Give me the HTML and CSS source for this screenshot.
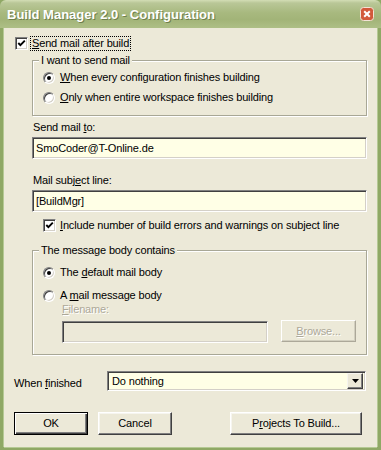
FILE: index.html
```html
<!DOCTYPE html>
<html lang="en">
<head>
    <meta charset="UTF-8">
    <title>Build Manager 2.0 - Configuration</title>
    <link rel="stylesheet" href="styles.css">
</head>
<body>

    <div class="window">

        <!-- Title bar -->
        <div class="titlebar">
            <span class="title">Build Manager 2.0 - Configuration</span>
            <span class="close-btn">
                <svg width="14" height="14" viewBox="0 0 14 14">
                    <rect x="0.5" y="0.5" width="13" height="13" rx="3" fill="#d2593b" stroke="#f3e3d6"/>
                    <path d="M4.2 4.2 L9.8 9.8 M9.8 4.2 L4.2 9.8" stroke="#fff" stroke-width="2"/>
                </svg>
            </span>
        </div>

        <div class="frame">

            <div class="check-row top-check">
                <span class="checkbox"><svg width="9" height="9" viewBox="0 0 9 9"><polyline points="1.3,4 3.4,6.2 7.8,1.6" fill="none" stroke="#000" stroke-width="1.9"/></svg></span>
                <span class="focus"><u>S</u>end mail after build</span>
            </div>

            <fieldset class="group group-send">
                <legend>I want to send mail</legend>
                <div class="radio-row"><span class="radio on"></span><span><u>W</u>hen every configuration finishes building</span></div>
                <div class="radio-row second"><span class="radio"></span><span><u>O</u>nly when entire workspace finishes building</span></div>
            </fieldset>

            <div class="field-label">Send mail <u>t</u>o:</div>
            <div class="textbox">SmoCoder@T-Online.de</div>

            <div class="field-label subject-label">Mail subj<u>e</u>ct line:</div>
            <div class="textbox">[BuildMgr]</div>

            <div class="check-row sub-check">
                <span class="checkbox"><svg width="9" height="9" viewBox="0 0 9 9"><polyline points="1.3,4 3.4,6.2 7.8,1.6" fill="none" stroke="#000" stroke-width="1.9"/></svg></span>
                <span><u>I</u>nclude number of build errors and warnings on subject line</span>
            </div>

            <fieldset class="group group-body">
                <legend>The message body contains</legend>
                <div class="radio-row"><span class="radio on"></span><span>The <u>d</u>efault mail body</span></div>
                <div class="radio-row second"><span class="radio"></span><span>A <u>m</u>ail message body</span></div>
                <div class="file-label disabled"><u>F</u>ilename:</div>
                <div class="file-row">
                    <div class="textbox file-box"></div>
                    <div class="button browse disabled"><u>B</u>rowse...</div>
                </div>
            </fieldset>

            <div class="finish-row">
                <span class="finish-label">When <u>f</u>inished</span>
                <div class="combo">
                    <span class="combo-text">Do nothing</span>
                    <span class="combo-btn"><svg width="7" height="4" viewBox="0 0 7 4"><polygon points="0,0 7,0 3.5,4" fill="#000"/></svg></span>
                </div>
            </div>

            <div class="button-row">
                <div class="button default">OK</div>
                <div class="button cancel">Cancel</div>
                <div class="button projects">P<u>r</u>ojects To Build...</div>
            </div>

        </div>
    </div>

</body>
</html>
```

FILE: styles.css
```css
* {
    box-sizing: border-box;
}

body {
    margin: 0;
    font-family: "Liberation Sans", Arial, sans-serif;
    font-size: 11px;
    letter-spacing: -0.15px;
    line-height: 13px;
    color: #000;
}

.window {
    width: 381px;
    height: 450px;
    display: flex;
    flex-direction: column;
    background: #8fa865;
}

.titlebar {
    height: 28px;
    display: flex;
    align-items: center;
    padding: 0 7px 0 7px;
    background: linear-gradient(to bottom, #d3ddb5 0, #b9c797 3px, #a8b97f 45%, #a2b478 70%, #aebf86 100%);
    border-radius: 6px 6px 0 0;
}

.title {
    color: #fff;
    font-size: 13px;
    font-weight: bold;
    letter-spacing: 0;
    text-shadow: 1px 1px 0 #6f7f4c;
}

.close-btn {
    margin-left: auto;
    height: 14px;
    margin-top: -1px;
}

.frame {
    flex: 1;
    background: #ece9d8;
    margin: 0 4px 3px 4px;
    padding: 0 10px 0 10px;
    display: flex;
    flex-direction: column;
    box-shadow: -1px 0 0 #b5c994, 1px 0 0 #b5c994, 0 1px 0 #b5c994;
}

u {
    text-decoration: underline;
    text-underline-offset: 1px;
}

/* checkboxes */
.check-row {
    display: flex;
    align-items: center;
    height: 13px;
}

.top-check {
    margin-top: 9px;
    margin-left: 1px;
}

.sub-check {
    margin-top: 7px;
    margin-left: 29px;
}

.checkbox {
    width: 13px;
    height: 13px;
    background: #fff;
    border: 1px solid;
    border-color: #808080 #fff #fff #808080;
    box-shadow: inset 1px 1px 0 #404040, inset -1px -1px 0 #d4d0c8;
    display: flex;
    align-items: center;
    justify-content: center;
    margin-right: 4px;
    flex-shrink: 0;
}

.top-check .checkbox {
    margin-right: 3px;
}

.focus {
    outline: 1px dotted #000;
    padding: 0 1px;
}

/* group boxes */
.group {
    margin: 0 0 0 18px;
    border: 1px solid #a8a796;
    box-shadow: 1px 1px 0 #fff, inset 1px 1px 0 #fff;
    padding: 0 10px 11px 10px;
    min-width: 0;
}

.group legend {
    padding: 0 2px;
    margin-left: -4px;
    background: #ece9d8;
    line-height: 13px;
}

.group-send {
    margin-top: 4px;
    padding-top: 4px;
}

.group-body {
    margin-top: 12px;
    padding-top: 9px;
}

.radio-row {
    display: flex;
    align-items: center;
    height: 13px;
}

.group-send .radio-row.second {
    margin-top: 7px;
}

.group-body .radio-row.second {
    margin-top: 10px;
}

.radio {
    width: 12px;
    height: 12px;
    border-radius: 50%;
    background: #fff;
    border: 1px solid;
    border-color: #808080 #fff #fff #808080;
    box-shadow: inset 1px 1px 0 #404040, inset -1px -1px 0 #d4d0c8;
    margin-right: 5px;
    display: flex;
    align-items: center;
    justify-content: center;
    flex-shrink: 0;
}

.radio.on::after {
    content: "";
    width: 4px;
    height: 4px;
    border-radius: 50%;
    background: #000;
}

/* text fields */
.field-label {
    margin: 5px 0 0 19px;
}

.subject-label {
    margin-top: 15px;
}

.textbox {
    margin: 3px 0 0 18px;
    height: 22px;
    padding: 4px 0 0 3px;
    background: #ffffe6;
    border: 1px solid;
    border-color: #808080 #fff #fff #808080;
    box-shadow: inset 1px 1px 0 #404040, inset -1px -1px 0 #d4d0c8;
    white-space: nowrap;
}

.disabled {
    color: #aca899;
    text-shadow: 1px 1px 0 #fff;
}

.file-label {
    margin: 1px 0 0 19px;
}

.file-row {
    display: flex;
    margin: 5px 0 0 19px;
    gap: 13px;
}

.file-box {
    margin: 0;
    width: 206px;
    background: #ece9d8;
}

/* buttons */
.button {
    height: 23px;
    display: flex;
    align-items: center;
    justify-content: center;
    background: #ece9d8;
    border: 1px solid;
    border-color: #fff #404040 #404040 #fff;
    box-shadow: inset -1px -1px 0 #808080, inset 1px 1px 0 #f6f5ef;
}

.browse {
    width: 75px;
    height: 22px;
    margin-top: -1px;
    border-color: #fff #aca899 #aca899 #fff;
    box-shadow: inset -1px -1px 0 #d2cfbf;
}

.finish-row {
    display: flex;
    align-items: center;
    margin-top: 16px;
}

.finish-label {
    width: 93px;
    padding-top: 4px;
}

.combo {
    flex: 1;
    height: 20px;
    margin-right: 1px;
    display: flex;
    align-items: center;
    padding: 2px 2px 2px 4px;
    background: #ffffe6;
    border: 1px solid;
    border-color: #808080 #fff #fff #808080;
    box-shadow: inset 1px 1px 0 #404040, inset -1px -1px 0 #d4d0c8;
}

.combo-text {
    flex: 1;
}

.combo-btn {
    width: 16px;
    height: 16px;
    display: flex;
    align-items: center;
    justify-content: center;
    background: #ece9d8;
    border: 1px solid;
    border-color: #f6f5ef #404040 #404040 #f6f5ef;
    box-shadow: inset -1px -1px 0 #808080;
}

.button-row {
    display: flex;
    margin-top: 21px;
}

.default {
    width: 74px;
    border-color: #000;
    box-shadow: inset 1px 1px 0 #fff, inset -1px -1px 0 #404040, inset -2px -2px 0 #808080;
}

.cancel {
    width: 74px;
    margin-left: 10px;
}

.projects {
    width: 132px;
    margin-left: auto;
    margin-right: 5px;
}
```
